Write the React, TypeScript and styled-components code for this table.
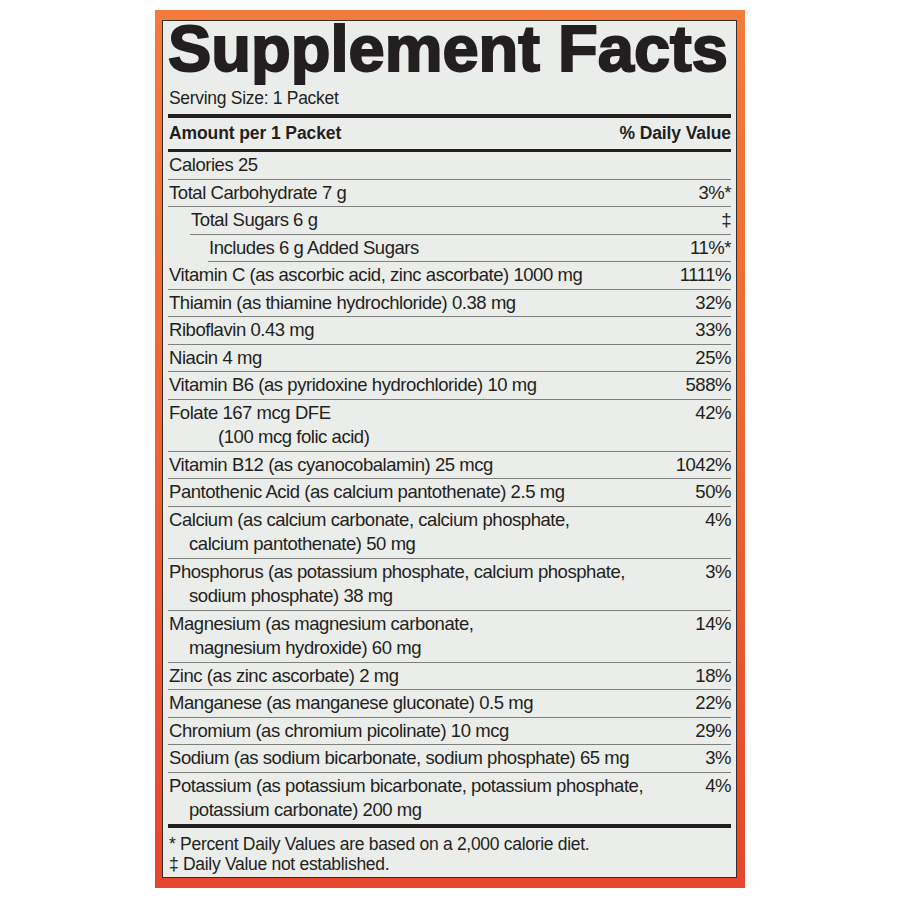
import styled, { createGlobalStyle } from "styled-components";

const GlobalStyle = createGlobalStyle`
  body {
    margin: 0;
    background: #ffffff;
  }
`;

const Page = styled.div`
  display: flex;
  justify-content: center;
  padding-top: 10px;
`;

const Frame = styled.div`
  width: 590px;
  box-sizing: border-box;
  padding: 10px 8px 10px 7px;
  background: linear-gradient(180deg, #f27c3c 0%, #ec6733 45%, #e4472d 100%);
`;

const Panel = styled.div`
  border: 1px solid #3b2b26;
  background: #ebedeb;
  padding: 0 5px 3px 5px;
  color: #231f20;
  font-family: "Liberation Sans", Arial, sans-serif;
`;

const Title = styled.h1`
  margin: -5px 0 0;
  font-weight: 900;
  font-size: 65px;
  line-height: 66px;
  letter-spacing: 0;
  -webkit-text-stroke: 2px #231f20;
  white-space: nowrap;
`;

const Serving = styled.div`
  margin-top: 5px;
  font-size: 17.5px;
  line-height: 22px;
  letter-spacing: -0.3px;
  padding-left: 1px;
`;

const Bar = styled.div<{ $h: number; $gap?: number }>`
  height: ${(p) => p.$h}px;
  margin-top: ${(p) => p.$gap ?? 0}px;
  background: #231f20;
`;

const HeadRow = styled.div`
  display: flex;
  justify-content: space-between;
  align-items: center;
  height: 31px;
  font-weight: bold;
  font-size: 17.5px;
  letter-spacing: -0.1px;
  padding-left: 1px;
`;

const Row = styled.div<{ $indent: number; $last?: boolean }>`
  display: flex;
  justify-content: space-between;
  align-items: flex-start;
  margin-left: ${(p) => p.$indent}px;
  padding: 1px 0 1px;
  border-bottom: ${(p) => (p.$last ? "none" : "1px solid #7f807e")};
  font-size: 18.5px;
  line-height: 24.5px;
  letter-spacing: -0.45px;
`;

const Name = styled.div`
  padding-left: 1px;
`;

const Line = styled.div<{ $indent: number }>`
  padding-left: ${(p) => p.$indent}px;
  white-space: nowrap;
`;

const Value = styled.div`
  text-align: right;
  white-space: nowrap;
`;

const Notes = styled.div`
  padding-top: 6px;
  font-size: 17.5px;
  line-height: 20px;
  letter-spacing: -0.3px;
  padding-left: 1px;
`;

interface Nutrient {
  lines: string[];
  value: string;
  indent?: number;
  wrap?: number;
}

const nutrients: Nutrient[] = [
  { lines: ["Calories 25"], value: "" },
  { lines: ["Total Carbohydrate 7 g"], value: "3%*" },
  { lines: ["Total Sugars 6 g"], value: "‡", indent: 22 },
  { lines: ["Includes 6 g Added Sugars"], value: "11%*", indent: 40 },
  { lines: ["Vitamin C (as ascorbic acid, zinc ascorbate) 1000 mg"], value: "1111%" },
  { lines: ["Thiamin (as thiamine hydrochloride) 0.38 mg"], value: "32%" },
  { lines: ["Riboflavin 0.43 mg"], value: "33%" },
  { lines: ["Niacin 4 mg"], value: "25%" },
  { lines: ["Vitamin B6 (as pyridoxine hydrochloride) 10 mg"], value: "588%" },
  { lines: ["Folate 167 mcg DFE", "(100 mcg folic acid)"], value: "42%", wrap: 49 },
  { lines: ["Vitamin B12 (as cyanocobalamin) 25 mcg"], value: "1042%" },
  { lines: ["Pantothenic Acid (as calcium pantothenate) 2.5 mg"], value: "50%" },
  {
    lines: ["Calcium (as calcium carbonate, calcium phosphate,", "calcium pantothenate) 50 mg"],
    value: "4%",
  },
  {
    lines: ["Phosphorus (as potassium phosphate, calcium phosphate,", "sodium phosphate) 38 mg"],
    value: "3%",
  },
  { lines: ["Magnesium (as magnesium carbonate,", "magnesium hydroxide) 60 mg"], value: "14%" },
  { lines: ["Zinc (as zinc ascorbate) 2 mg"], value: "18%" },
  { lines: ["Manganese (as manganese gluconate) 0.5 mg"], value: "22%" },
  { lines: ["Chromium (as chromium picolinate) 10 mcg"], value: "29%" },
  { lines: ["Sodium (as sodium bicarbonate, sodium phosphate) 65 mg"], value: "3%" },
  {
    lines: ["Potassium (as potassium bicarbonate, potassium phosphate,", "potassium carbonate) 200 mg"],
    value: "4%",
  },
];

const App = () => {
  return (
    <>
      <GlobalStyle />
      <Page>
        <Frame>
          <Panel>
            <Title>Supplement Facts</Title>
            <Serving>Serving Size: 1 Packet</Serving>
            <Bar $h={4} $gap={5} />
            <HeadRow>
              <span>Amount per 1 Packet</span>
              <span>% Daily Value</span>
            </HeadRow>
            <Bar $h={3} />
            {nutrients.map((n, i) => (
              <Row key={i} $indent={n.indent ?? 0} $last={i === nutrients.length - 1}>
                <Name>
                  {n.lines.map((l, j) => (
                    <Line key={j} $indent={j === 0 ? 0 : n.wrap ?? 20}>
                      {l}
                    </Line>
                  ))}
                </Name>
                <Value>{n.value}</Value>
              </Row>
            ))}
            <Bar $h={4} />
            <Notes>
              <div>* Percent Daily Values are based on a 2,000 calorie diet.</div>
              <div>‡ Daily Value not established.</div>
            </Notes>
          </Panel>
        </Frame>
      </Page>
    </>
  );
};

export default App;
